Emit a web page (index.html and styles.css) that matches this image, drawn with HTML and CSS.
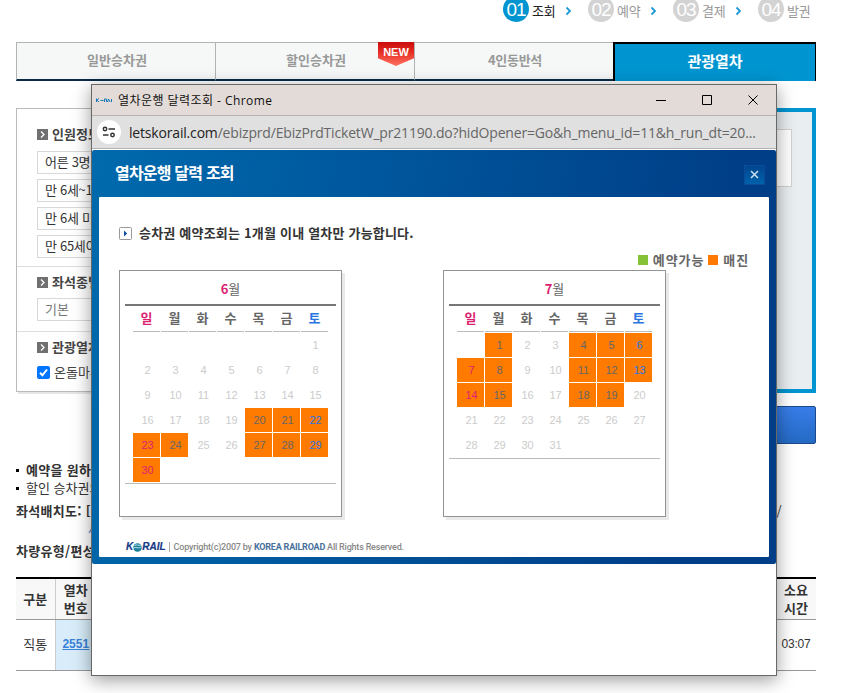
FILE: index.html
```
<!DOCTYPE html>
<html lang="ko">
<head>
    <meta charset="UTF-8">
    <meta name="viewport" content="width=device-width, initial-scale=1">
    <title>관광열차</title>
    <link rel="stylesheet" href="styles.css">
</head>
<body>
    <div class="page">
        <ol class="steps">
            <li class="on"><b>01</b><span>조회</span><svg width="7" height="10" viewBox="0 0 7 10"><path d="M1.5 1.5L5 5L1.5 8.5"/></svg></li>
            <li><b>02</b><span>예약</span><svg width="7" height="10" viewBox="0 0 7 10"><path d="M1.5 1.5L5 5L1.5 8.5"/></svg></li>
            <li><b>03</b><span>결제</span><svg width="7" height="10" viewBox="0 0 7 10"><path d="M1.5 1.5L5 5L1.5 8.5"/></svg></li>
            <li><b>04</b><span>발권</span></li>
        </ol>

        <div class="tabs">
            <div class="tab">일반승차권</div>
            <div class="tab">할인승차권<span class="new">NEW</span></div>
            <div class="tab tight">4인동반석</div>
            <div class="tab active">관광열차</div>
        </div>

        <div class="search">
            <div class="options">
                <div class="group people">
                    <h3><i class="arrow"><svg width="11" height="11" viewBox="0 0 11 11"><path d="M4 2.5L7 5.5L4 8.5"/></svg></i>인원정보</h3>
                    <div class="select">어른 3명</div>
                    <div class="select">만 6세~12세</div>
                    <div class="select">만 6세 미만</div>
                    <div class="select">만 65세이상</div>
                </div>
                <div class="group">
                    <h3><i class="arrow"><svg width="11" height="11" viewBox="0 0 11 11"><path d="M4 2.5L7 5.5L4 8.5"/></svg></i>좌석종별</h3>
                    <div class="select light">기본</div>
                </div>
                <div class="group train">
                    <h3><i class="arrow"><svg width="11" height="11" viewBox="0 0 11 11"><path d="M4 2.5L7 5.5L4 8.5"/></svg></i>관광열차</h3>
                    <div class="check"><svg width="13" height="13" viewBox="0 0 13 13"><rect width="13" height="13" rx="2"/><path d="M3 6.8L5.4 9.3L10 3.5"/></svg>온돌마루</div>
                </div>
            </div>
            <div class="route"><div class="route-box"></div></div>
        </div>
        <div class="submit"></div>

        <ul class="notes">
            <li class="strong">예약을 원하</li>
            <li>할인 승차권의</li>
        </ul>
        <div class="info"><span>좌석배치도: [</span><span>/</span></div>
        <div class="info-link">새마을</div>
        <div class="info cars">차량유형/편성</div>

        <table class="trains">
            <tr><th class="kind">구분</th><th class="no">열차<br>번호</th><th></th><th class="time">소요<br>시간</th></tr>
            <tr><td class="kind">직통</td><td class="no"><u>2551</u></td><td></td><td class="time">03:07</td></tr>
        </table>
    </div>

    <div class="window">
        <div class="titlebar">
            <svg class="favicon" width="16" height="6" viewBox="0 0 16 6"><path d="M.5 1.500v3.500M3 1.500L1 3.200L3 5M4.500 3.500h3M8.500 5V2h2v3M11.500 5l1-3L14 5M15.500 2v3"/></svg>
            <span class="title">열차운행 달력조회 - Chrome</span>
            <svg class="controls" width="104" height="12" viewBox="0 0 104 12"><path d="M0 6.500H10M46.500 1.500h9v9h-9zM92.500 1.500l9 9M101.500 1.500l-9 9"/></svg>
        </div>
        <div class="address">
            <i class="site"><svg width="14" height="12" viewBox="0 0 14 12"><path d="M6.500 3H13M1 9H6.500"/><circle cx="3" cy="3" r="1.700"/><circle cx="10.500" cy="9" r="1.700"/></svg></i>
            <span class="url"><b>letskorail.com</b>/ebizprd/EbizPrdTicketW_pr21190.do?hidOpener=Go&amp;h_menu_id=11&amp;h_run_dt=20...</span>
        </div>
        <div class="popup">
            <div class="popup-head">
                <h1>열차운행 달력 조회</h1>
                <div class="close"><svg width="9" height="9" viewBox="0 0 9 9"><path d="M1 1L8 8M8 1L1 8"/></svg></div>
            </div>
            <div class="popup-body">
                <p class="notice"><svg width="13" height="13" viewBox="0 0 13 13"><rect x=".5" y=".5" width="12" height="12" rx="1"/><path d="M5 3.500v6L8.200 6.500z"/></svg>승차권 예약조회는 1개월 이내 열차만 가능합니다.</p>
                <div class="legend"><i class="green"></i>예약가능<i class="orange"></i>매진</div>
                <div class="months">
                    <div class="month">
                        <div class="name"><b>6</b>월</div>
                        <div class="days">
                            <b class="sun">일</b><b>월</b><b>화</b><b>수</b><b>목</b><b>금</b><b class="sat">토</b>
                            <span></span><span></span><span></span><span></span><span></span><span></span><span>1</span>
                            <span>2</span><span>3</span><span>4</span><span>5</span><span>6</span><span>7</span><span>8</span>
                            <span>9</span><span>10</span><span>11</span><span>12</span><span>13</span><span>14</span><span>15</span>
                            <span>16</span><span>17</span><span>18</span><span>19</span><span class="full">20</span><span class="full">21</span><span class="full sat">22</span>
                            <span class="full sun">23</span><span class="full">24</span><span>25</span><span>26</span><span class="full">27</span><span class="full">28</span><span class="full sat">29</span>
                            <span class="full sun">30</span>
                        </div>
                    </div>
                    <div class="month">
                        <div class="name"><b>7</b>월</div>
                        <div class="days">
                            <b class="sun">일</b><b>월</b><b>화</b><b>수</b><b>목</b><b>금</b><b class="sat">토</b>
                            <span></span><span class="full">1</span><span>2</span><span>3</span><span class="full">4</span><span class="full">5</span><span class="full sat">6</span>
                            <span class="full sun">7</span><span class="full">8</span><span>9</span><span>10</span><span class="full">11</span><span class="full">12</span><span class="full sat">13</span>
                            <span class="full sun">14</span><span class="full">15</span><span>16</span><span>17</span><span class="full">18</span><span class="full">19</span><span>20</span>
                            <span>21</span><span>22</span><span>23</span><span>24</span><span>25</span><span>26</span><span>27</span>
                            <span>28</span><span>29</span><span>30</span><span>31</span>
                        </div>
                    </div>
                </div>
                <div class="footer">
                    <span class="logo">K<svg width="9" height="9" viewBox="0 0 9 9"><circle cx="4.500" cy="4.500" r="4.300"/><path d="M0 5.500C3 3 5 6.500 9 3.500M1.500 2.500C4 1 5 3 8 2"/></svg>RAIL</span>
                    <span class="copy">Copyright(c)2007 by <b>KOREA RAILROAD</b> All Rights Reserved.</span>
                </div>
            </div>
        </div>
    </div>
</body>
</html>
```
FILE: styles.css
```
* {
    box-sizing: border-box;
}
body {
    margin: 0;
    width: 841px;
    height: 693px;
    overflow: hidden;
    position: relative;
    background-color: #fff;
    color: #333;
    font: 13px/18px "Noto Sans CJK KR", sans-serif;
}
h1, h3, p, ul, ol {
    margin: 0;
    padding: 0;
    list-style: none;
}
svg {
    flex: none;
    fill: none;
}
.page {
    width: 800px;
    margin-left: 16px;
}

/* booking steps */
.steps {
    display: flex;
    height: 22px;
    padding-left: 487px;
}
.steps li {
    display: flex;
    flex: none;
    align-items: flex-end;
    width: 85px;
    color: #999;
}
.steps b {
    width: 26px;
    height: 26px;
    padding-top: 5px;
    border-radius: 50%;
    background-color: #d3d3d3;
    color: #fff;
    font: 19px/17px "Liberation Sans", sans-serif;
    letter-spacing: -1px;
    text-align: center;
}
.steps span {
    width: 26px;
    margin: 0 7px 2px 3px;
    letter-spacing: -.3px;
}
.steps svg {
    margin-bottom: 6px;
    stroke: #1e9ad6;
    stroke-width: 1.8;
}
.steps .on {
    color: #222;
}
.steps .on b {
    background-color: #0095d0;
}

/* ticket tabs */
.tabs {
    display: flex;
    height: 39px;
    margin-top: 20px;
}
.tab {
    position: relative;
    width: 199px;
    border: solid #b3b3b3;
    border-width: 1px 0 2px 1px;
    border-bottom-color: #0a2a49;
    background-color: #f5f8f7;
    color: #999;
    font-weight: bold;
    line-height: 34px;
    text-align: center;
    padding-left: 2px;
}
.tab.tight {
    letter-spacing: -.3px;
}
.tab.active {
    width: 203px;
    border: solid #000;
    border-width: 2px 1px 0 2px;
    background-color: #0095d0;
    color: #fff;
    font-size: 15px;
    line-height: 33px;
    padding: 0;
}
.new {
    position: absolute;
    top: -1px;
    right: 0;
    width: 36px;
    height: 24px;
    background-image: linear-gradient(#c80d0d, #e52a20 40%, #ff7261);
    clip-path: polygon(0 0, 100% 0, 100% 68%, 50% 100%, 0 68%);
    color: #fff;
    font: bold 11px/20px "Liberation Sans", sans-serif;
}

/* search form */
.search {
    display: flex;
    margin-top: 27px;
}
.options {
    width: 200px;
    height: 284px;
    border: 1px solid #bbb;
    box-shadow: 2px 2px 0 #e5e5e5;
}
.group {
    padding: 6px 0 10px 20px;
    border-bottom: 1px solid #ddd;
}
.group.people {
    padding: 16px 0 3px 20px;
}
.group.train {
    border: 0;
}
.group h3 {
    display: flex;
    align-items: center;
    height: 18px;
    font-size: 13px;
    color: #444;
    margin-bottom: 8px;
}
.group:nth-child(2) h3 {
    margin-bottom: 7px;
}
.group.train h3 {
    margin-bottom: 7px;
}
.arrow {
    width: 11px;
    height: 11px;
    margin-right: 4px;
    background-color: #707070;
}
.arrow svg {
    display: block;
    stroke: #fff;
    stroke-width: 1.3;
}
.select {
    height: 23px;
    margin-bottom: 5px;
    padding-left: 7px;
    border: 1px solid #d8d8d8;
    line-height: 20px;
    letter-spacing: -.3px;
}
.select.light {
    margin-bottom: 0;
    color: #777;
    letter-spacing: 0;
}
.check {
    display: flex;
    align-items: center;
    gap: 4px;
    color: #444;
}
.check svg {
    stroke: #fff;
    stroke-width: 2;
}
.check rect {
    fill: #0075ff;
    stroke: none;
}
.route {
    flex: 1;
    height: 285px;
    margin-left: 20px;
    padding: 17px 20px;
    border: 4px solid #0095d0;
    background-color: #e9eef1;
}
.route-box {
    height: 58px;
    border: 1px solid #d0d0d0;
    background-color: #fff;
}
.submit {
    width: 120px;
    height: 38px;
    margin: 13px 0 0 680px;
    border: 1px solid #1b4a8c;
    border-radius: 2px;
    background-image: linear-gradient(#387de8, #246ac4);
}

/* notes under the form */
.notes {
    margin-top: 17px;
}
.notes li {
    display: flex;
    align-items: center;
    gap: 7px;
}
.notes li::before {
    content: "";
    width: 3px;
    height: 3px;
    background-color: #000;
}
.strong, .info {
    font-weight: bold;
    letter-spacing: .3px;
}
.info {
    display: flex;
    margin-top: 5px;
}
.info span + span {
    margin-left: auto;
    padding-right: 34px;
    font-weight: normal;
}
.info-link {
    padding-left: 72px;
    color: #1b73c7;
}
.info.cars {
    margin-top: 4px;
}

/* train list */
.trains {
    width: 800px;
    margin-top: 17px;
    border-collapse: collapse;
    text-align: center;
}
.trains th, .trains td {
    padding: 0;
    border-bottom: 1px solid #999;
}
.trains th {
    height: 41px;
    border-top: 2px solid #000;
    background-color: #f8f8f8;
}
.trains td {
    height: 51px;
    padding-bottom: 2px;
}
.trains .kind {
    width: 39px;
    border-right: 1px solid #ccc;
}
.trains .no {
    width: 41px;
}
.trains td.no {
    background-color: #d8edf9;
    color: #3a81d8;
    font: bold 12px "Liberation Sans", sans-serif;
}
.trains .time {
    width: 40px;
}
.trains td.time {
    font: 12px "Liberation Sans", sans-serif;
    letter-spacing: -.2px;
}

/* popup browser window */
.window {
    position: absolute;
    left: 91px;
    top: 84px;
    width: 686px;
    height: 592px;
    border: 1px solid #686868;
    background-color: #fff;
    box-shadow: 0 4px 17px rgba(0, 0, 0, .4);
}
.titlebar {
    display: flex;
    align-items: center;
    height: 31px;
    padding: 0 16px 0 4px;
    border-bottom: 1px solid #b3b3b3;
    background-color: #e3dbd8;
}
.favicon {
    stroke: #1678b9;
    stroke-width: 1;
}
.title {
    margin-left: 6px;
    color: #111;
    font: 12px "Open Sans", "Noto Sans CJK KR", sans-serif;
    letter-spacing: .45px;
}
.controls {
    margin-left: auto;
    stroke: #000;
}
.address {
    display: flex;
    align-items: center;
    height: 33px;
    padding-left: 5px;
    border-bottom: 1px solid #b3b3b3;
    background-color: #e0e0e0;
}
.site {
    display: flex;
    align-items: center;
    justify-content: center;
    width: 24px;
    height: 24px;
    border-radius: 50%;
    background-color: #fff;
}
.site svg {
    stroke: #333;
    stroke-width: 1.5;
}
.url {
    margin-left: 8px;
    color: #666;
    font: 14px "Open Sans", sans-serif;
    letter-spacing: -.18px;
    white-space: nowrap;
}
.url b {
    font-weight: normal;
    color: #222;
}
.popup {
    height: 414px;
    margin-top: 1px;
    padding: 0 7px 7px;
    border-radius: 2px;
    background-image: linear-gradient(100deg, #006aad, #003f88 85%);
}
.popup-head {
    display: flex;
    align-items: center;
    justify-content: space-between;
    height: 47px;
    padding: 0 4px 0 16px;
}
.popup-head h1 {
    color: #fff;
    font-size: 16px;
    letter-spacing: -.8px;
    padding-bottom: 4px;
}
.close {
    display: flex;
    align-items: center;
    justify-content: center;
    width: 21px;
    height: 20px;
    margin-top: 2px;
    border: 1px solid #0a4c9a;
    background-image: linear-gradient(#00458f, #0061ab);
}
.close svg {
    stroke: #c5dcef;
    stroke-width: 1.6;
}
.popup-body {
    height: 360px;
    padding: 27px 20px 0;
    border-radius: 1px;
    background-color: #fff;
}
.notice {
    display: flex;
    align-items: center;
    gap: 7px;
    height: 18px;
    font-weight: bold;
    letter-spacing: .2px;
}
.notice rect {
    stroke: #999;
}
.notice path {
    fill: #0b51a0;
}
.legend {
    display: flex;
    align-items: center;
    justify-content: flex-end;
    height: 18px;
    margin-top: 9px;
    color: #666;
    font-weight: bold;
    letter-spacing: .9px;
}
.legend i {
    width: 10px;
    height: 10px;
    margin: 0 5px 0 4px;
}
.green {
    background-color: #85c236;
}
.orange {
    background-color: #ff7b00;
}
.months {
    display: flex;
    gap: 101px;
    margin-top: 1px;
}
.month {
    width: 223px;
    height: 247px;
    padding: 9px 5px 0;
    border: 1px solid #939393;
    box-shadow: 3px 3px 0 #e9e9e9;
    color: #666;
}
.name {
    height: 26px;
    border-bottom: 2px solid #777;
    text-align: center;
    line-height: 17px;
}
.name b, .days .sun {
    color: #dc1f72;
}
.days {
    display: grid;
    grid-template-columns: repeat(7, 27px);
    grid-template-rows: 26px;
    grid-auto-rows: 24px;
    gap: 1px;
    padding: 0 8px 1px;
    border-bottom: 1px solid #bbb;
    text-align: center;
}
.days b {
    border-bottom: 1px solid #bbb;
    line-height: 23px;
}
.days span {
    padding-left: 2px;
    color: #ccc;
    font: 11px/24px "Liberation Sans", sans-serif;
}
.days .full {
    background-color: #ff7b00;
    color: #666;
}
.days .sun {
    color: #dc1f72;
}
.days .sat {
    color: #2875e2;
}
.footer {
    display: flex;
    align-items: center;
    height: 12px;
    margin-top: 24px;
    padding-left: 7px;
}
.logo {
    display: flex;
    align-items: center;
    color: #173a87;
    font: italic bold 10px/10px "Liberation Sans", sans-serif;
    -webkit-text-stroke: .2px #173a87;
}
.logo circle {
    fill: #1c7f9c;
}
.logo path {
    stroke: #bfe3e8;
}
.copy {
    margin-left: 3px;
    padding-left: 4px;
    border-left: 1px solid #aaa;
    color: #888;
    font: 500 9px/10px Roboto, "Liberation Sans", sans-serif;
    letter-spacing: -.2px;
    white-space: nowrap;
}
.copy b {
    color: #48709c;
}
```
